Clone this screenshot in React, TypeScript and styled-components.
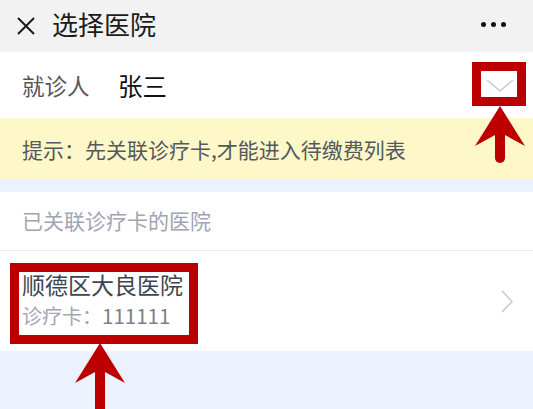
import React from "react";
import styled, { createGlobalStyle } from "styled-components";

const Global = createGlobalStyle`
  html, body { margin: 0; padding: 0; background: #ebf2fd; }
  body { font-family: "Noto Sans CJK SC", "Noto Sans", sans-serif; }
  * { box-sizing: border-box; }
`;

const Page = styled.div`
  position: relative;
  width: 533px;
  min-height: 409px;
  background: #ebf2fd;
  overflow: hidden;
`;

const TopBar = styled.div`
  height: 52px;
  background: #f2f2f2;
  display: flex;
  align-items: center;
  padding: 0 20px 0 17px;
`;

const Title = styled.div`
  margin-left: 17px;
  font-size: 26px;
  color: #1b1b1b;
  line-height: 1;
  flex: 1;
  margin-top: -4px;
`;

const Dots = styled.div`
  display: flex;
  gap: 5px;
  margin-top: -4px;
  margin-right: 7px;
`;

const Dot = styled.span`
  width: 5px;
  height: 5px;
  border-radius: 50%;
  background: #111;
`;

const PatientRow = styled.div`
  height: 66px;
  background: #fff;
  display: flex;
  align-items: center;
  padding: 0 19px 0 22px;
`;

const Label = styled.span`
  font-size: 22.5px;
  color: #505762;
  width: 96px;
`;

const Name = styled.span`
  font-size: 24.5px;
  color: #111;
  flex: 1;
`;

const Tip = styled.div`
  height: 62px;
  background: #fef8c8;
  display: flex;
  align-items: center;
  padding: 0 22px;
  font-size: 21px;
  color: #55585e;
`;

const Gap = styled.div`
  height: 12px;
`;

const SectionHead = styled.div`
  height: 59px;
  background: #fff;
  display: flex;
  align-items: center;
  padding: 0 22px 2px;
  font-size: 21px;
  color: #a0a4b4;
  border-bottom: 1px solid #e8ebf0;
`;

const HospitalRow = styled.div`
  height: 100px;
  background: #fff;
  display: flex;
  align-items: center;
  padding: 0 20px 0 22px;
`;

const HospitalInfo = styled.div`
  flex: 1;
  display: flex;
  flex-direction: column;
  margin-top: -3px;
`;

const HospitalName = styled.div`
  font-size: 23px;
  color: #3e4550;
  line-height: 32px;
`;

const CardNo = styled.div`
  font-size: 20px;
  color: #a3a7b3;
  line-height: 30px;
  span { color: #7c8088; font-size: 20.5px; }
`;

const Box = styled.div`
  position: absolute;
  border: 9px solid #bc0000;
  pointer-events: none;
`;

const Overlay = styled.svg`
  position: absolute;
  left: 0;
  top: 0;
  pointer-events: none;
`;

const Arrow = ({ x, tip, end }: { x: number; tip: number; end: number }) => (
  <g fill="#bc0000">
    <path
      d={`M${x} ${tip} L${x + 25} ${tip + 40} L${x + 5} ${tip + 29} L${x - 5} ${tip + 29} L${x - 25} ${tip + 40} Z`}
    />
    <rect x={x - 5} y={tip + 20} width={10} height={end - tip - 25} />
    <circle cx={x} cy={end - 5} r={5} />
  </g>
);

export default function App() {
  return (
    <Page>
      <Global />
      <TopBar>
        <svg width="18" height="18" viewBox="0 0 18 18">
          <path d="M1 1 L17 17 M17 1 L1 17" stroke="#1b1b1b" strokeWidth="2" />
        </svg>
        <Title>选择医院</Title>
        <Dots>
          <Dot />
          <Dot />
          <Dot />
        </Dots>
      </TopBar>
      <PatientRow>
        <Label>就诊人</Label>
        <Name>张三</Name>
        <svg width="28" height="14" viewBox="0 0 28 14" style={{ marginTop: 2 }}>
          <path d="M1 1 L14 12 L27 1" fill="none" stroke="#c7cbd8" strokeWidth="1.6" />
        </svg>
      </PatientRow>
      <Tip>提示：先关联诊疗卡,才能进入待缴费列表</Tip>
      <Gap />
      <SectionHead>已关联诊疗卡的医院</SectionHead>
      <HospitalRow>
        <HospitalInfo>
          <HospitalName>顺德区大良医院</HospitalName>
          <CardNo>
            诊疗卡：<span>111111</span>
          </CardNo>
        </HospitalInfo>
        <svg width="12" height="23" viewBox="0 0 12 23">
          <path d="M1 1 L11 11.5 L1 22" fill="none" stroke="#c7cbd3" strokeWidth="1.6" />
        </svg>
      </HospitalRow>
      <Box style={{ left: 472, top: 62, width: 54, height: 44 }} />
      <Box style={{ left: 10, top: 263, width: 188, height: 81 }} />
      <Overlay width="533" height="409" viewBox="0 0 533 409">
        <Arrow x={500} tip={106} end={163} />
        <Arrow x={100} tip={343} end={420} />
      </Overlay>
    </Page>
  );
}
